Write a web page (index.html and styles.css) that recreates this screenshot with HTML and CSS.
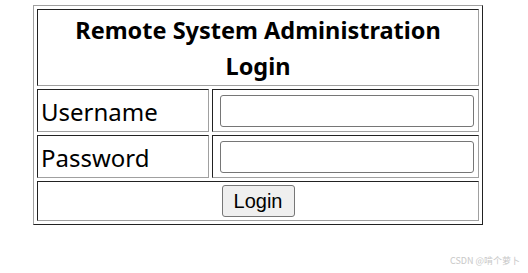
FILE: index.html
```html
<!DOCTYPE html>
<html lang="en">
<head>
	<meta charset="utf-8">
	<title>Remote System Administration Login</title>
	<link rel="stylesheet" href="styles.css">
</head>
<body>
	<form class="login-form">
		<table class="login-table">
			<tr>
				<th colspan="2" class="title">Remote System Administration Login</th>
			</tr>
			<tr>
				<td class="label">Username</td>
				<td class="field"><input type="text" name="username"></td>
			</tr>
			<tr>
				<td class="label">Password</td>
				<td class="field"><input type="password" name="password"></td>
			</tr>
			<tr>
				<td colspan="2" class="actions"><input type="submit" value="Login"></td>
			</tr>
		</table>
	</form>
	<div class="watermark">CSDN @啃个萝卜</div>
</body>
</html>
```

FILE: styles.css
```css
body{
	margin: 0;
	padding: 5px 0 0 33px;
	font-family: "Noto Sans", sans-serif;
}

.login-table{
	width: 450px;
	border-collapse: separate;
	border-spacing: 3px;
	border: 1px solid;
	border-color: #a0a0a0 #222 #222 #a0a0a0;
}
	.login-table th,
	.login-table td{
		box-sizing: border-box;
		border: 1px solid;
		border-color: #222 #a0a0a0 #a0a0a0 #222;
		padding: 1px 3px;
	}

	.login-table .title{
		font-size: 23.5px;
		font-weight: bold;
		line-height: 36px;
		padding: 2px 3px 1px;
	}

	.login-table .label{
		width: 172px;
		font-size: 24px;
		line-height: 35px;
		padding: 4px 3px 2px;
	}

	.login-table .field{
		padding: 1px 2px 1px 7px;
	}
		.field input{
			width: 254px;
			height: 32px;
			box-sizing: border-box;
			border: 1px solid #767676;
			border-radius: 3px;
			margin: 0;
			vertical-align: middle;
		}

	.login-table .actions{
		text-align: center;
		padding: 3px;
	}
		.actions input{
			font-family: "Liberation Sans", Arial, sans-serif;
			font-size: 20px;
			height: 32px;
			width: 73px;
			padding: 0;
			margin: 0;
			background: #efefef;
			border: 1px solid #767676;
			border-radius: 3px;
			vertical-align: middle;
		}

.watermark{
	position: absolute;
	right: 8px;
	bottom: 6px;
	font-family: "Noto Sans CJK SC", sans-serif;
	font-size: 9px;
	color: #c8c8c8;
}
```
